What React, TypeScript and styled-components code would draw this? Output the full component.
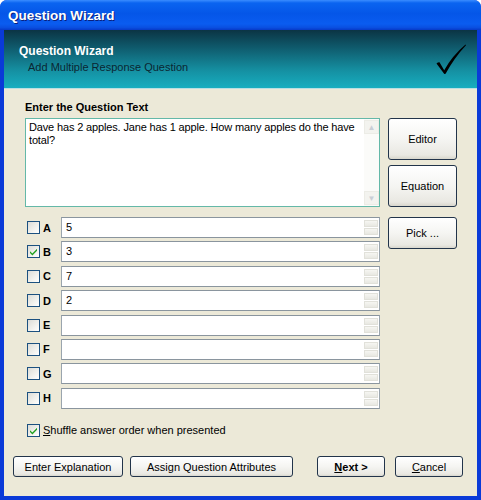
import React from 'react'
import styled, { createGlobalStyle } from 'styled-components'

const GlobalStyle = createGlobalStyle`
  html, body { margin: 0; padding: 0; background: #ffffff; }
  body { font-family: 'Liberation Sans', Arial, sans-serif; font-size: 11px; color: #000; }
`

const Window = styled.div`
  width: 481px;
  height: 500px;
  display: flex;
  flex-direction: column;
  background: #0a3ad8;
  border-radius: 7px 7px 0 0;
  overflow: hidden;
`

const TitleBar = styled.div`
  height: 30px;
  flex: none;
  display: flex;
  align-items: center;
  padding: 0 8px;
  background: linear-gradient(#3a8cff 0%, #0a64f0 10%, #0556e8 45%, #0a5cf0 80%, #0a4fe0 92%, #0639c8 100%);
  color: #fff;
  font-family: 'Liberation Sans', Arial, sans-serif;
  font-weight: bold;
  font-size: 13.5px;
  text-shadow: 1px 1px 0 #0a1f7a;
`

const Frame = styled.div`
  flex: 1;
  display: flex;
  flex-direction: column;
  margin: 0 4px 4px;
  background: #ece9d8;
`

const Banner = styled.div`
  height: 58px;
  flex: none;
  display: flex;
  align-items: center;
  justify-content: space-between;
  padding: 0 10px 0 15px;
  background: linear-gradient(#0b3444 0%, #0f5a6c 30%, #1590a2 70%, #17aec0 100%);
  border-bottom: 1px solid #b9dfe2;
`

const BannerText = styled.div`
  display: flex;
  flex-direction: column;
  gap: 3px;
  margin-top: -2px;
`

const BannerTitle = styled.div`
  font-weight: bold;
  font-size: 12px;
  color: #ffffff;
`

const BannerSub = styled.div`
  font-size: 11px;
  color: #0b2632;
  padding-left: 9px;
`

const Main = styled.div`
  display: grid;
  grid-template-columns: 355px 69px;
  column-gap: 8px;
  padding: 12px 0 0 21px;
`

const LeftCol = styled.div`
  display: flex;
  flex-direction: column;
`

const RightCol = styled.div`
  display: flex;
  flex-direction: column;
  padding-top: 17px;
`

const SectionLabel = styled.div`
  font-weight: bold;
  font-size: 11px;
  height: 17px;
`

const QuestionBox = styled.div`
  height: 89px;
  display: flex;
  background: #fff;
  border: 1px solid #64b8a8;
  box-sizing: border-box;
`

const QuestionText = styled.div`
  flex: 1;
  padding: 2px 2px 2px 3px;
  font-size: 11px;
  line-height: 13px;
  letter-spacing: -0.15px;
`

const FadedScroll = styled.div`
  width: 15px;
  display: flex;
  flex-direction: column;
  justify-content: space-between;
  padding: 1px 0;
  box-sizing: border-box;
  background: #fbfbf9;
`

const ScrollArrow = styled.div`
  height: 14px;
  display: flex;
  align-items: center;
  justify-content: center;
  color: #c9ced6;
  font-size: 8px;
  background: #f3f3ef;
  border: 1px solid #ecece6;
  box-sizing: border-box;
`

const Answers = styled.div`
  display: flex;
  flex-direction: column;
  gap: 3.4px;
  margin-top: 10px;
`

const AnswerRow = styled.div`
  display: flex;
  align-items: center;
  height: 21px;
  padding-left: 2px;
`

const Box = styled.div`
  width: 13px;
  height: 13px;
  flex: none;
  box-sizing: border-box;
  border: 1px solid #1c5180;
  background: linear-gradient(135deg, #dcdcd7 0%, #f2f2ee 60%, #ffffff 100%);
  display: flex;
  align-items: center;
  justify-content: center;
`

const Letter = styled.div`
  width: 18px;
  padding-left: 3px;
  font-weight: bold;
  font-size: 11px;
`

const AnswerField = styled.div`
  flex: 1;
  height: 21px;
  display: flex;
  box-sizing: border-box;
  background: #fff;
  border: 1px solid #9aa5ae;
  border-top-color: #8a959e;
  border-bottom-color: #8a959e;
`

const FieldValue = styled.div`
  flex: 1;
  padding: 3px 4px;
  font-size: 11px;
`

const MiniScroll = styled.div`
  width: 16px;
  display: flex;
  flex-direction: column;
  gap: 1px;
  padding: 2px 1px;
  box-sizing: border-box;
`

const MiniStep = styled.div`
  flex: 1;
  background: linear-gradient(#f6f6f2, #e8e8e2);
  border: 1px solid #e1e1da;
`

const ShuffleRow = styled.label`
  display: flex;
  align-items: center;
  gap: 3px;
  margin: 15px 0 0 2px;
  font-size: 11px;
`

const Button = styled.button<{ $w: number; $h?: number; $bold?: boolean }>`
  width: ${p => p.$w}px;
  height: ${p => p.$h ?? 21}px;
  box-sizing: border-box;
  padding: 0;
  border: 1px solid #22344a;
  border-radius: 3px;
  background: linear-gradient(#ffffff 0%, #f5f5f2 50%, #e9e8e2 90%, #d8d6cc 100%);
  font-family: 'Liberation Sans', Arial, sans-serif;
  font-size: 11px;
  font-weight: ${p => (p.$bold ? 'bold' : 'normal')};
  color: #000;
  display: flex;
  align-items: center;
  justify-content: center;
`

const SideStack = styled.div`
  display: flex;
  flex-direction: column;
  gap: 5px;
`

const Footer = styled.div`
  margin-top: auto;
  display: flex;
  align-items: center;
  padding: 0 0 19px 9px;
`

const FooterGroup = styled.div<{ $gap: number }>`
  display: flex;
  gap: ${p => p.$gap}px;
`

const Key = styled.span`
  text-decoration: underline;
`

const Tick = () => (
  <svg width="9" height="9" viewBox="0 0 9 9">
    <path d="M1 4.2 L3.4 6.6 L8 1.8 L8 3.8 L3.4 8.4 L1 6 Z" fill="#21a121" />
  </svg>
)

const BrushCheck = () => (
  <svg width="32" height="32" viewBox="0 0 32 32">
    <path
      d="M1.5 20.5 Q3 19 4.5 19.2 L9.2 27.2 Q17 13 30.5 1.5 L31 2.2 Q19 15 10.6 30.8 L9.3 31 Z"
      fill="#000"
    />
  </svg>
)

const answers = [
  { key: 'A', value: '5', checked: false },
  { key: 'B', value: '3', checked: true },
  { key: 'C', value: '7', checked: false },
  { key: 'D', value: '2', checked: false },
  { key: 'E', value: '', checked: false },
  { key: 'F', value: '', checked: false },
  { key: 'G', value: '', checked: false },
  { key: 'H', value: '', checked: false },
]

export default function App() {
  return (
    <>
      <GlobalStyle />
      <Window>
        <TitleBar>Question Wizard</TitleBar>
        <Frame>
          <Banner>
            <BannerText>
              <BannerTitle>Question Wizard</BannerTitle>
              <BannerSub>Add Multiple Response Question</BannerSub>
            </BannerText>
            <BrushCheck />
          </Banner>

          <Main>
            <LeftCol>
              <SectionLabel>Enter the Question Text</SectionLabel>
              <QuestionBox>
                <QuestionText>
                  Dave has 2 apples. Jane has 1 apple. How many apples do the have total?
                </QuestionText>
                <FadedScroll>
                  <ScrollArrow>&#9650;</ScrollArrow>
                  <ScrollArrow>&#9660;</ScrollArrow>
                </FadedScroll>
              </QuestionBox>

              <Answers>
                {answers.map(a => (
                  <AnswerRow key={a.key}>
                    <Box>{a.checked && <Tick />}</Box>
                    <Letter>{a.key}</Letter>
                    <AnswerField>
                      <FieldValue>{a.value}</FieldValue>
                      <MiniScroll>
                        <MiniStep />
                        <MiniStep />
                      </MiniScroll>
                    </AnswerField>
                  </AnswerRow>
                ))}
              </Answers>

              <ShuffleRow>
                <Box>
                  <Tick />
                </Box>
                <span>
                  <Key>S</Key>huffle answer order when presented
                </span>
              </ShuffleRow>
            </LeftCol>

            <RightCol>
              <SideStack>
                <Button $w={69} $h={42}>Editor</Button>
                <Button $w={69} $h={42}>Equation</Button>
              </SideStack>
              <Button $w={69} $h={32} style={{ marginTop: 10 }}>Pick ...</Button>
            </RightCol>
          </Main>

          <Footer>
            <FooterGroup $gap={7}>
              <Button $w={110}>Enter Explanation</Button>
              <Button $w={163}>Assign Question Attributes</Button>
            </FooterGroup>
            <FooterGroup $gap={10} style={{ marginLeft: 24 }}>
              <Button $w={68} $bold>
                <Key>N</Key>ext &gt;
              </Button>
              <Button $w={68}>
                <Key>C</Key>ancel
              </Button>
            </FooterGroup>
          </Footer>
        </Frame>
      </Window>
    </>
  )
}
